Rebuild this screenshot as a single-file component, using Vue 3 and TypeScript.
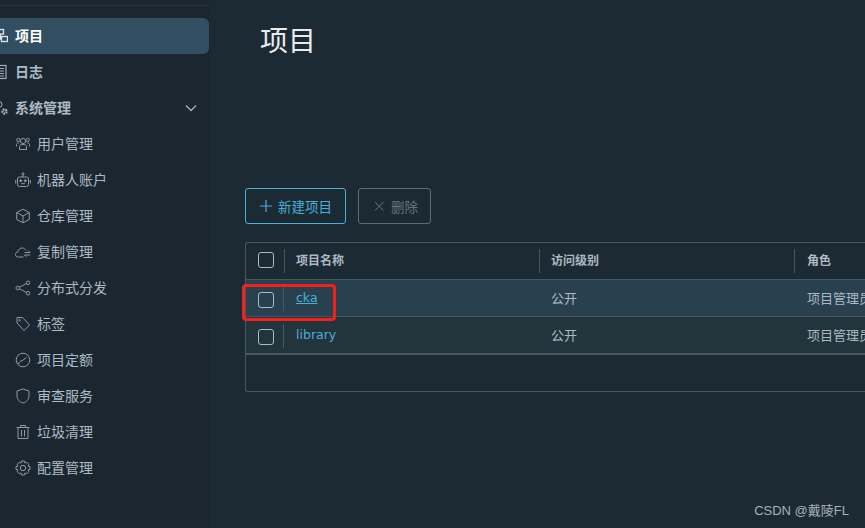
<template>
    <div class="page">
        <aside class="sidebar">
            <nav class="nav">
                <a
                    v-for="item in navItems"
                    :key="item.label"
                    class="nav-item"
                    :class="{ active: item.active, child: item.child, top: !item.child }"
                >
                    <svg class="nav-icon" viewBox="0 0 16 16" fill="none" stroke="currentColor" stroke-width="1" v-html="icons[item.icon]"></svg>
                    <span class="nav-label">{{ item.label }}</span>
                    <svg v-if="item.caret" class="caret" viewBox="0 0 12 8" fill="none" stroke="currentColor" stroke-width="1.3">
                        <path d="M1 1.5 L6 6.5 L11 1.5" />
                    </svg>
                </a>
            </nav>
        </aside>
        <main class="content">
            <h1 class="title">项目</h1>
            <div class="actions">
                <button class="btn primary">
                    <svg viewBox="0 0 14 14" fill="none" stroke="currentColor" stroke-width="1.2"><path d="M7 1 V13 M1 7 H13" /></svg>
                    新建项目
                </button>
                <button class="btn disabled">
                    <svg viewBox="0 0 14 14" fill="none" stroke="currentColor" stroke-width="1"><path d="M3 3 L11.5 11.5 M11.5 3 L3 11.5" /></svg>
                    删除
                </button>
            </div>
            <div class="grid">
                <div class="row head">
                    <div class="cell check"><span class="box"></span></div>
                    <div class="cell name">项目名称</div>
                    <div class="cell level">访问级别</div>
                    <div class="cell role">角色</div>
                </div>
                <div
                    v-for="p in projects"
                    :key="p.name"
                    class="row body"
                    :class="{ hover: p.hover }"
                >
                    <div class="cell check"><span class="box"></span></div>
                    <div class="cell name"><a class="link" :class="{ under: p.hover }">{{ p.name }}</a></div>
                    <div class="cell level">{{ p.level }}</div>
                    <div class="cell role">{{ p.role }}</div>
                </div>
                <div class="grid-foot"></div>
            </div>
        </main>
        <div class="marker"></div>
        <div class="watermark">CSDN @戴陵FL</div>
    </div>
</template>

<script setup lang="ts">
interface NavItem {
    label: string;
    icon: string;
    active?: boolean;
    child?: boolean;
    caret?: boolean;
}

const icons: Record<string, string> = {
    project:
        '<rect x="3" y="1.5" width="8.5" height="4.5" stroke-width="1.3" /><rect x="9.5" y="8.5" width="6" height="5" stroke-width="1.3" /><path d="M8.5 6 V11 H9.5" stroke-width="1.3" />',
    log: '<rect x="1" y="1.5" width="13" height="13" stroke-width="1.2" /><path d="M3.5 4.5 H12 M3.5 7 H12 M3.5 9.5 H12 M3.5 12 H12" />',
    system:
        '<circle cx="7" cy="4.5" r="3" /><circle cx="12.5" cy="11.5" r="2" stroke-width="2.4" stroke-dasharray="1.6 0.7" />',
    users:
        '<circle cx="8" cy="5" r="2.6" /><path d="M4.5 13.5 V10.5 C4.5 9 6 8.5 8 8.5 C10 8.5 11.5 9 11.5 10.5 V13.5 Z" /><circle cx="3.4" cy="4" r="1.7" /><circle cx="12.6" cy="4" r="1.7" /><path d="M1.5 10.5 V8.5 C1.5 7.4 2.5 7 3.8 7 M14.5 10.5 V8.5 C14.5 7.4 13.5 7 12.2 7" />',
    robot:
        '<rect x="2.5" y="5" width="11" height="9.5" rx="2" /><circle cx="8" cy="1.8" r="1" /><path d="M8 2.8 V5 M.7 8 V11.5 M15.3 8 V11.5" /><circle cx="5.7" cy="8.7" r="1" fill="currentColor" /><circle cx="10.3" cy="8.7" r="1" fill="currentColor" /><path d="M6 11.7 H10" />',
    box: '<path d="M8 1.2 L14.3 4.6 V11.4 L8 14.8 L1.7 11.4 V4.6 Z M1.7 4.6 L8 8 L14.3 4.6 M8 8 V14.8" />',
    cloud:
        '<path d="M8.5 13 H3.3 C1.5 13 .5 11.8 .5 10.5 C.5 9.2 1.3 8.2 2.8 8 C3.2 5.5 5 4 7.2 4 C9 4 10.4 5 11 6.5" /><path d="M9.5 8.5 H15.2 L13.4 6.8 M15.2 11 H9.5 L11.3 12.8" />',
    share:
        '<circle cx="2.8" cy="8" r="1.8" /><circle cx="13" cy="2.8" r="1.8" /><circle cx="13" cy="13.2" r="1.8" /><path d="M4.4 7.2 L11.4 3.6 M4.4 8.8 L11.4 12.4" />',
    tag: '<path d="M2 1.5 H7.5 L14.5 9 L9 14.5 L2 7 Z" /><circle cx="4.6" cy="4.2" r=".8" />',
    gauge:
        '<circle cx="8" cy="8" r="6.8" /><path d="M3.5 12 C4.2 9.8 5.5 8.8 7.3 8.6 L11.5 5.5" />',
    shield: '<path d="M8 1 L14 3 V8 C14 11.5 11.5 14 8 15 C4.5 14 2 11.5 2 8 V3 Z" />',
    trash:
        '<path d="M1.5 3.5 H14.5 M5.5 3.5 V1.5 H10.5 V3.5 M3 3.5 V14.5 H13 V3.5 M6.5 6 V12.5 M9.5 6 V12.5" />',
    gear: '<circle cx="8" cy="8" r="2.7" /><path d="M6.6 1 H9.4 L9.9 3 L11.7 2.2 L13.8 4.3 L13 6.1 L15 6.6 V9.4 L13 9.9 L13.8 11.7 L11.7 13.8 L9.9 13 L9.4 15 H6.6 L6.1 13 L4.3 13.8 L2.2 11.7 L3 9.9 L1 9.4 V6.6 L3 6.1 L2.2 4.3 L4.3 2.2 L6.1 3 Z" />',
};

const navItems: NavItem[] = [
    { label: '项目', icon: 'project', active: true },
    { label: '日志', icon: 'log' },
    { label: '系统管理', icon: 'system', caret: true },
    { label: '用户管理', icon: 'users', child: true },
    { label: '机器人账户', icon: 'robot', child: true },
    { label: '仓库管理', icon: 'box', child: true },
    { label: '复制管理', icon: 'cloud', child: true },
    { label: '分布式分发', icon: 'share', child: true },
    { label: '标签', icon: 'tag', child: true },
    { label: '项目定额', icon: 'gauge', child: true },
    { label: '审查服务', icon: 'shield', child: true },
    { label: '垃圾清理', icon: 'trash', child: true },
    { label: '配置管理', icon: 'gear', child: true },
];

const projects = [
    { name: 'cka', level: '公开', role: '项目管理员', hover: true },
    { name: 'library', level: '公开', role: '项目管理员', hover: false },
];
</script>

<style>
html,
body {
    margin: 0;
    background: #1c2a33;
    overflow: hidden;
}
</style>

<style scoped>
.page {
    display: flex;
    width: 865px;
    height: 528px;
    overflow: hidden;
    position: relative;
    background: #1c2a33;
    font-family: "Noto Sans CJK SC", "Noto Sans", sans-serif;
    font-size: 13px;
    color: #acbac3;
}

.sidebar {
    width: 210px;
    height: 528px;
    flex-shrink: 0;
    background: #1b2730;
    overflow: hidden;
    box-sizing: border-box;
    padding-top: 18px;
    position: relative;
}

.sidebar::before {
    content: "";
    position: absolute;
    top: 5px;
    left: 0;
    right: 0;
    height: 1px;
    background: #25343d;
}

.nav {
    width: 209px;
}

.nav-item {
    display: flex;
    align-items: center;
    height: 36px;
    color: #acbac3;
    font-size: 14px;
}

.nav-label {
    padding-bottom: 2px;
}

.nav-item.top {
    margin-left: -8px;
    font-weight: 600;
}

.nav-item.top .nav-icon {
    margin-right: 7px;
    color: #a3b0b8;
}

.nav-item.child {
    padding-left: 15px;
}

.nav-item.child .nav-icon {
    margin-right: 6px;
}

.nav-item.active {
    background: #324f61;
    color: #ffffff;
    font-weight: 700;
    border-radius: 0 6px 6px 0;
}

.nav-icon {
    width: 16px;
    height: 16px;
    flex-shrink: 0;
    color: #8d9ba3;
}

.nav-item.top.active .nav-icon {
    color: #dfe6ea;
}

.caret {
    width: 12px;
    height: 8px;
    margin-left: auto;
    margin-right: 12px;
    color: #a5b3bb;
}

.content {
    flex: 1;
    min-width: 0;
    padding-left: 35px;
}

.title {
    margin: 0;
    padding: 18px 0 0 15px;
    height: 188px;
    box-sizing: border-box;
    font-size: 28px;
    line-height: 42px;
    font-weight: 400;
    color: #e9ecef;
}

.actions {
    display: flex;
    gap: 12px;
    height: 54px;
}

.btn {
    display: flex;
    align-items: center;
    height: 36px;
    box-sizing: border-box;
    background: transparent;
    border: 1px solid;
    border-radius: 3px;
    font-family: inherit;
    font-size: 13.5px;
    padding: 0;
}

.btn svg {
    width: 14px;
    height: 14px;
    margin-right: 5px;
}

.btn.primary {
    width: 101px;
    padding-left: 13px;
    border-color: #49afd9;
    color: #49afd9;
}

.btn.disabled {
    width: 73px;
    padding-left: 13px;
    border-color: #5f6b72;
    color: #667379;
}

.grid {
    width: 700px;
    height: 150px;
    box-sizing: border-box;
    border: 1px solid #485764;
    border-right: none;
    border-radius: 3px 0 0 3px;
}

.row {
    display: flex;
    align-items: center;
    height: 37px;
    box-sizing: border-box;
    border-bottom: 1px solid #485764;
}

.row.head {
    font-weight: 700;
    font-size: 12px;
    color: #acbac3;
}

.row.head .cell {
    padding-bottom: 3px;
}

.row.head .cell.check {
    padding-bottom: 2px;
}

.row.body {
    background: #22343c;
}

.row.body.hover {
    background: #29414f;
}

.row.body:nth-child(3) {
    height: 38px;
    border-bottom-width: 2px;
}

.row.body .cell {
    padding-bottom: 2px;
}

.row.body .cell.check {
    padding-top: 4px;
    padding-bottom: 0;
}

.cell {
    height: 100%;
    display: flex;
    align-items: center;
    box-sizing: border-box;
    position: relative;
}

.cell.check {
    width: 39px;
    padding-left: 12px;
}

.cell.name {
    width: 255px;
    padding-left: 11px;
}

.cell.level {
    width: 255px;
    padding-left: 11px;
}

.cell.role {
    flex: 1;
    padding-left: 12px;
}

.head .check::after,
.head .name::after,
.head .level::after,
.body .check::after {
    content: "";
    position: absolute;
    right: 0;
    top: 6px;
    bottom: 6px;
    width: 1px;
    background: #485764;
}

.body .check::after {
    right: 1px;
    top: 7px;
    bottom: 5px;
}

.box {
    display: block;
    width: 16px;
    height: 16px;
    box-sizing: border-box;
    border: 1px solid #acbac3;
    border-radius: 3px;
}

.link {
    color: #49afd9;
    font-family: "DejaVu Sans", sans-serif;
    font-size: 12.5px;
}

.link.under {
    text-decoration: underline;
}

.marker {
    position: absolute;
    left: 242px;
    top: 284px;
    width: 94px;
    height: 37px;
    box-sizing: border-box;
    border: 3px solid #f5201a;
    border-radius: 4px;
}

.watermark {
    position: absolute;
    right: 16px;
    top: 502px;
    font-family: "Liberation Sans", "Noto Sans CJK SC", sans-serif;
    font-size: 13px;
    line-height: 18px;
    color: #a9b2b7;
}
</style>
